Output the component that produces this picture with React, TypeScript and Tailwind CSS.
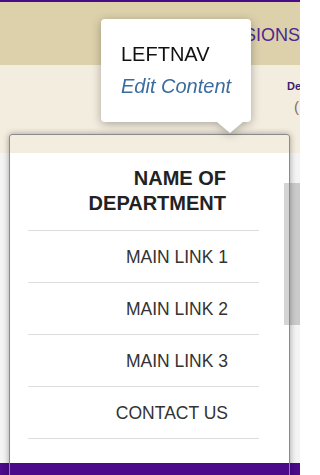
import React from 'react'

const links = ['MAIN LINK 1', 'MAIN LINK 2', 'MAIN LINK 3', 'CONTACT US']

export default function App() {
  return (
    <div className="relative w-[300px] h-[475px] overflow-hidden bg-[#f4f4f4] font-['Liberation_Sans',Arial,sans-serif]">
      {/* top purple strip */}
      <div className="h-[2px] bg-[#4b0a8a]" />

      {/* tan header */}
      <div className="h-[63px] bg-[#ddd1ac] pt-[24px] flex justify-end whitespace-nowrap">
        <span className="text-[18px] leading-[18px] text-[#4a2a8f]">ADMISSIONS</span>
      </div>

      {/* cream band */}
      <div className="h-[88px] bg-[#f3eddf] pl-[287px] pt-[14px] whitespace-nowrap">
        <div className="text-[11px] leading-[14px] font-bold text-[#3b1f70]">De</div>
        <div className="mt-[4px] pl-[7px] text-[15px] leading-[20px] text-[#8c6a55]">(</div>
      </div>

      {/* left nav column */}
      <div className="ml-[10px] w-[279px] h-[310px] bg-white">
        <div className="ml-[18px] w-[231px]">
          <div className="pt-[13px] pb-[14px] pr-[33px] border-b border-[#dddddd] text-right text-[20px] leading-[25px] font-bold text-[#222222]">
            NAME OF
            <br />
            DEPARTMENT
          </div>
          {links.map((l) => (
            <div
              key={l}
              className="h-[52px] flex items-center justify-end pr-[31px] border-b border-[#dddddd] text-[17.5px] leading-[20px] text-[#333333]"
            >
              {l}
            </div>
          ))}
        </div>
      </div>

      {/* bottom purple bar */}
      <div className="h-[12px] bg-[#4b0a8a]" />

      {/* scroll handle overlay */}
      <div className="absolute left-[284px] top-[183px] w-[16px] h-[142px] bg-[rgba(0,0,0,0.17)]" />

      {/* editor outline around the nav */}
      <div className="absolute left-[9px] top-[134px] w-[281px] h-[360px] rounded-[3px] border-[1.5px] border-[#8a8a8a] shadow-[0_0_6px_rgba(0,0,0,0.35)]" />

      {/* tooltip */}
      <div className="absolute left-[101px] top-[19px] w-[150px] drop-shadow-[0_2px_5px_rgba(0,0,0,0.3)]">
        <div className="relative h-[103px] rounded-[4px] bg-white pl-[20px] pt-[19px]">
          <div className="text-[20px] leading-[32px] text-[#111111]">LEFTNAV</div>
          <div className="text-[20px] leading-[32px] italic text-[#3c6c9e]">Edit Content</div>
          <div className="absolute left-[116px] top-[103px] w-0 h-0 border-l-[13px] border-r-[13px] border-t-[11px] border-l-transparent border-r-transparent border-t-white" />
        </div>
      </div>
    </div>
  )
}
